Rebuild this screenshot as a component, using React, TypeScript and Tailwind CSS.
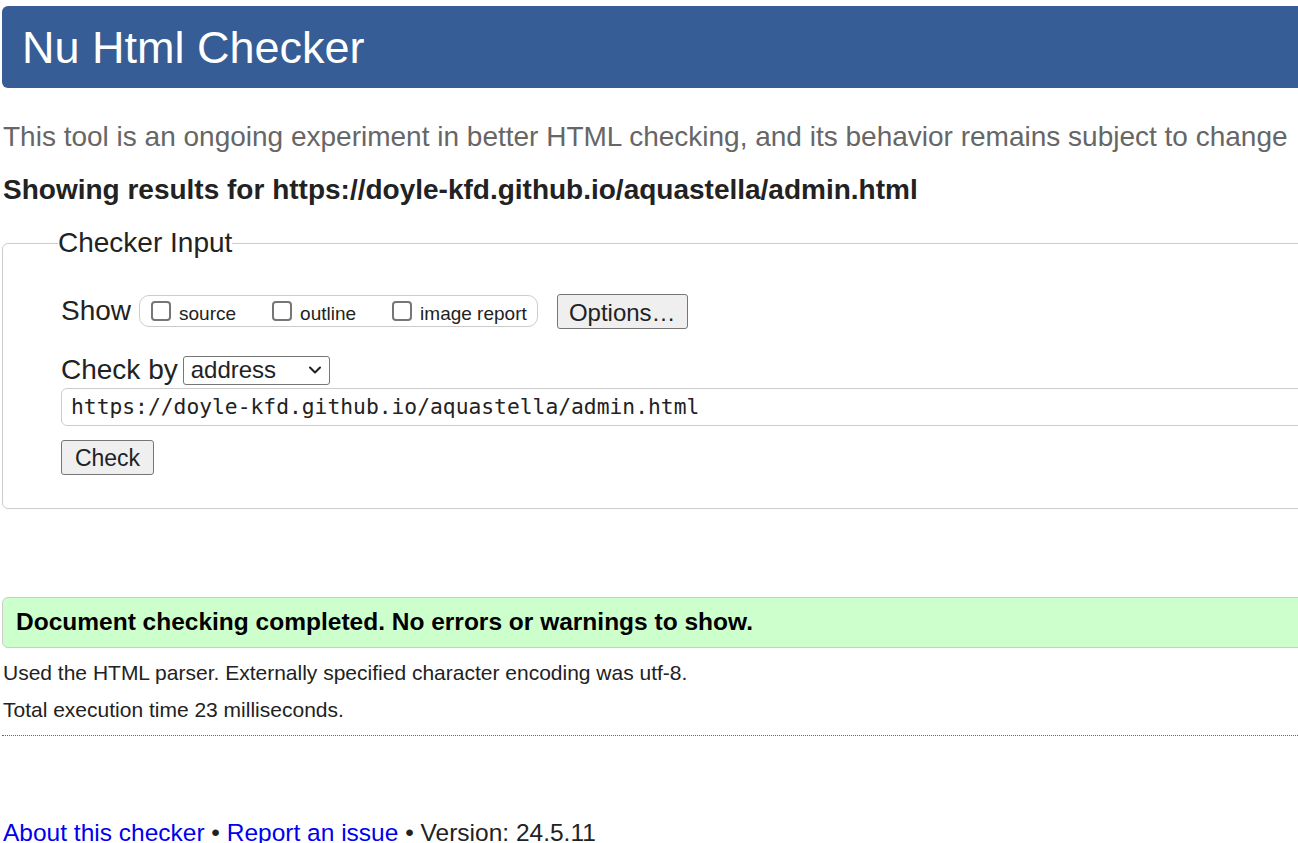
import { ChevronDown } from "lucide-react";

const Box = ({ label }: { label: string }) => (
    <label className="flex items-center gap-[8px]">
        <span className="h-[20px] w-[20px] rounded-[4px] border-2 border-[#767676] bg-white" />
        <span className="mt-[6px] text-[19px] leading-[22px]">{label}</span>
    </label>
);

const App = () => {
    return (
        <div className="h-[843px] w-[1298px] overflow-hidden bg-white text-[#222] font-['Liberation_Sans',Arial,sans-serif]">
            <div className="w-[1330px] pt-[6px] pl-[2px]">
                <h1 className="h-[82px] rounded-l-[6px] bg-[#365d95] pl-5 text-[45px] leading-[84px] text-white">
                    Nu Html Checker
                </h1>

                <p className="mt-[33px] pl-px text-[28px] leading-[32px] text-[#666] whitespace-nowrap">
                    This tool is an ongoing experiment in better HTML checking, and its behavior remains subject to change
                </p>
                <h2 className="mt-[21px] pl-px text-[28px] font-bold leading-[32px] whitespace-nowrap">
                    Showing results for https://doyle-kfd.github.io/aquastella/admin.html
                </h2>

                <fieldset className="mt-[21px] rounded-l-[6px] border border-[#ccc] pb-[33px] pl-[58px]">
                    <legend className="-ml-[3px] text-[28px] leading-[32px]">Checker Input</legend>
                    <div className="mt-[34px] flex h-[36px] items-center">
                        <span className="text-[28px]">Show</span>
                        <div className="ml-[8px] flex h-[32px] items-center gap-[36px] rounded-[10px] border border-[#ccc] pl-[11px] pr-[10px]">
                            <Box label="source" />
                            <Box label="outline" />
                            <Box label="image report" />
                        </div>
                        <button className="ml-[19px] h-[35px] w-[131px] rounded-[3px] border border-[#767676] bg-[#efefef] text-[24px]">
                            Options…
                        </button>
                    </div>
                    <div className="mt-[25px] flex h-[32px] items-center">
                        <span className="text-[28px]">Check by</span>
                        <div className="ml-[5px] flex h-[29px] w-[147px] items-center justify-between rounded-[3px] border border-[#767676] pl-[7px] pr-[4px] text-[24px]">
                            address
                            <ChevronDown className="h-5 w-5" strokeWidth={2.5} />
                        </div>
                    </div>
                    <div className="mt-[2px] flex h-[38px] items-center rounded-l-[6px] border border-[#ccc] pl-[9px] font-['DejaVu_Sans_Mono',monospace] text-[21.3px]">
                        https://doyle-kfd.github.io/aquastella/admin.html
                    </div>
                    <button className="mt-[14px] h-[35px] w-[93px] rounded-[3px] border border-[#767676] bg-[#efefef] text-[23px]">
                        Check
                    </button>
                </fieldset>

                <div className="mt-[88px] flex h-[51px] items-center rounded-l-[6px] border border-[#ccc] bg-[#ccffcc] pl-[13px] text-[24.5px] font-bold text-black">
                    Document checking completed. No errors or warnings to show.
                </div>
                <p className="mt-[13px] pl-px text-[21px] leading-[24px]">
                    Used the HTML parser. Externally specified character encoding was utf-8.
                </p>
                <p className="mt-[13px] pl-px text-[21px] leading-[24px]">Total execution time 23 milliseconds.</p>
                <div className="mt-[13px] border-b border-dotted border-[#666]" />

                <p className="mt-[83px] pl-px text-[24.5px] leading-[28px] whitespace-nowrap">
                    <a className="text-[#0000ee]">About this checker</a> •{" "}
                    <a className="text-[#0000ee]">Report an issue</a> • Version: 24.5.11
                </p>
            </div>
        </div>
    );
};

export default App;
